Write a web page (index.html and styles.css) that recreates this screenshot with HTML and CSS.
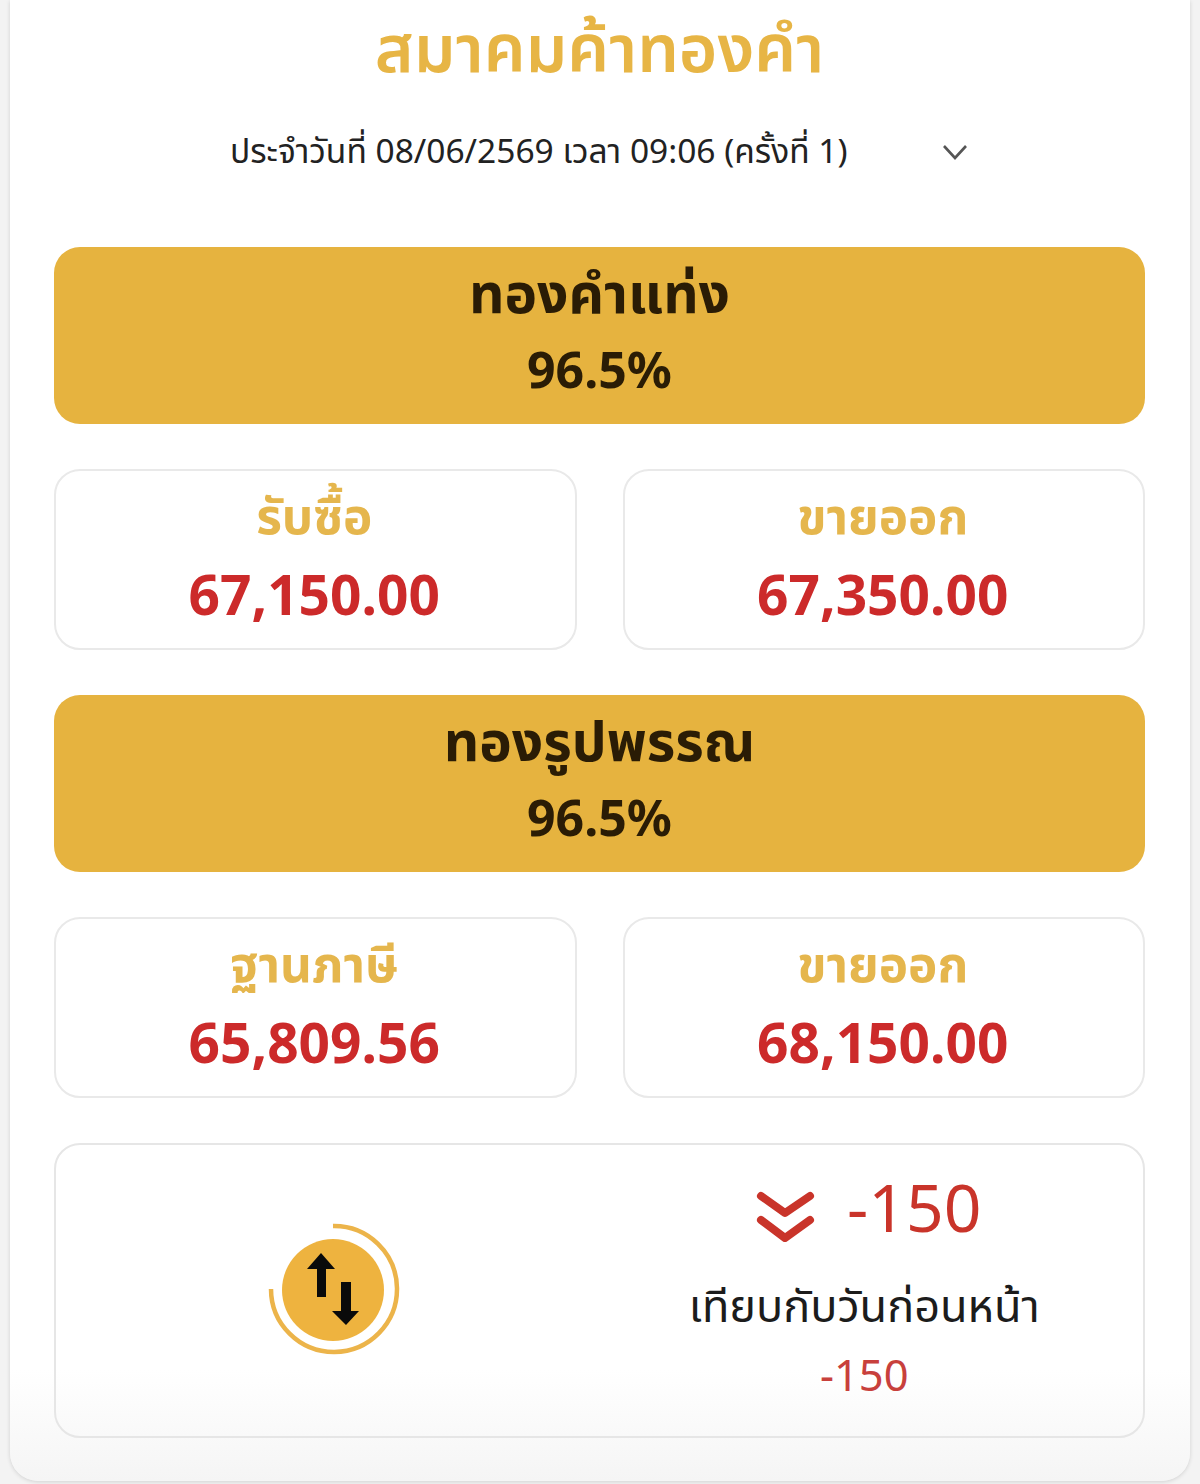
FILE: index.html
```html
<!DOCTYPE html>
<html lang="th">

<head>
    <meta charset="UTF-8">
    <title>สมาคมค้าทองคำ</title>
    <link rel="stylesheet" href="styles.css">
</head>

<body>
    <div class="panel">
        <h1 class="title">สมาคมค้าทองคำ</h1>

        <div class="select-row">
            <span class="select-text">ประจำวันที่ 08/06/2569 เวลา 09:06 (ครั้งที่ 1)</span>
            <svg class="chevron" width="28" height="18" viewBox="0 0 28 18">
                <path d="M3 3 L14 15 L25 3" fill="none" stroke="#555" stroke-width="2.6" />
            </svg>
        </div>

        <div class="gold-bar">
            <div class="gold-name">ทองคำแท่ง</div>
            <div class="gold-purity">96.5%</div>
        </div>
        <div class="price-row">
            <div class="price-card">
                <div class="price-label">รับซื้อ</div>
                <div class="price-value">67,150.00</div>
            </div>
            <div class="price-card">
                <div class="price-label">ขายออก</div>
                <div class="price-value">67,350.00</div>
            </div>
        </div>

        <div class="gold-bar">
            <div class="gold-name">ทองรูปพรรณ</div>
            <div class="gold-purity">96.5%</div>
        </div>
        <div class="price-row">
            <div class="price-card">
                <div class="price-label">ฐานภาษี</div>
                <div class="price-value">65,809.56</div>
            </div>
            <div class="price-card">
                <div class="price-label">ขายออก</div>
                <div class="price-value">68,150.00</div>
            </div>
        </div>

        <div class="change-card">
            <div class="change-icon">
                <svg width="132" height="134" viewBox="0 0 132 134">
                    <circle cx="65" cy="68" r="51" fill="#eeb33f" />
                    <path d="M65 4 A63 63 0 1 1 3 67" fill="none" stroke="#ecb44a" stroke-width="4.5" />
                    <path d="M53 31 L67 47 L58 47 L58 75 L49 75 L49 47 L39 47 Z" fill="#0a0a0a" />
                    <path d="M78 103 L91 89 L83 89 L83 60 L73 60 L73 89 L64 89 Z" fill="#0a0a0a" />
                </svg>
            </div>
            <div class="change-info">
                <div class="change-top">
                    <svg class="change-arrows" width="60" height="56" viewBox="0 0 60 56">
                        <path d="M6 9 L30 26 L55 9" fill="none" stroke="#c9342a" stroke-width="8" stroke-linecap="round" stroke-linejoin="round" />
                        <path d="M6 33 L30 51 L55 33" fill="none" stroke="#c9342a" stroke-width="8" stroke-linecap="round" stroke-linejoin="round" />
                    </svg>
                    <span class="change-big">-150</span>
                </div>
                <div class="change-text">เทียบกับวันก่อนหน้า</div>
                <div class="change-small">-150</div>
            </div>
        </div>
    </div>
</body>

</html>
```

FILE: styles.css
```css
body {
    margin: 0;
    height: 1484px;
    overflow: hidden;
    background-color: #f3f3f3;
    font-family: "Noto Sans", "Noto Sans Thai", "Open Sans", sans-serif;
}

.panel {
    box-sizing: border-box;
    height: 1481px;
    margin: 0 10px 0 10px;
    padding: 0 45px 0 44px;
    background: linear-gradient(#fff 0, #fff 1370px, #f5f5f5 100%);
    border-radius: 0 0 28px 28px;
    box-shadow: 0 1px 4px rgba(0, 0, 0, 0.14);
}

.title {
    margin: 0;
    height: 100px;
    line-height: 92px;
    text-align: center;
    font-size: 66px;
    font-weight: 600;
    color: #e7b545;
}

.select-row {
    box-sizing: border-box;
    display: flex;
    align-items: center;
    height: 102px;
    padding: 2px 0 0 176px;
}

.select-text {
    width: 617px;
    font-size: 33.5px;
    color: #222;
    white-space: nowrap;
}

.chevron {
    margin-left: 94px;
}

.gold-bar {
    box-sizing: border-box;
    height: 177px;
    margin-top: 45px;
    padding-top: 9px;
    background-color: #e6b33f;
    border-radius: 26px;
    text-align: center;
    font-weight: 700;
    color: #2a1c05;
}

.gold-name {
    height: 75px;
    line-height: 72px;
    font-size: 55px;
}

.gold-purity {
    line-height: 76px;
    font-size: 50px;
}

.price-row {
    display: grid;
    grid-template-columns: 1fr 1fr;
    gap: 46px;
    margin-top: 45px;
}

.price-card {
    box-sizing: border-box;
    height: 181px;
    padding: 10px 2px 0 0;
    border: 2px solid #e9e9e9;
    border-radius: 26px;
    text-align: center;
}

.price-label {
    height: 74px;
    line-height: 68px;
    font-size: 49.5px;
    font-weight: 700;
    color: #e5b64d;
}

.price-value {
    line-height: 78px;
    font-size: 55px;
    font-weight: 700;
    color: #cc2a2a;
}

.change-card {
    box-sizing: border-box;
    display: grid;
    grid-template-columns: 1fr 1fr;
    height: 295px;
    margin-top: 45px;
    border: 2px solid #e6e6e6;
    border-radius: 26px;
}

.change-icon {
    display: flex;
    align-items: center;
    justify-content: center;
    padding: 0 0 3px 12px;
}

.change-info {
    padding: 22px 14px 0 0;
    text-align: center;
}

.change-top {
    display: flex;
    align-items: center;
    justify-content: center;
    gap: 32px;
    height: 78px;
    margin-left: 8px;
}

.change-arrows {
    margin-top: 18px;
}

.change-big {
    font-size: 66px;
    color: #c9342a;
}

.change-text {
    margin-top: 30px;
    line-height: 60px;
    font-size: 45px;
    color: #1c1c1c;
}

.change-small {
    margin-top: 3px;
    line-height: 72px;
    font-size: 43.5px;
    color: #c8403c;
}
```
